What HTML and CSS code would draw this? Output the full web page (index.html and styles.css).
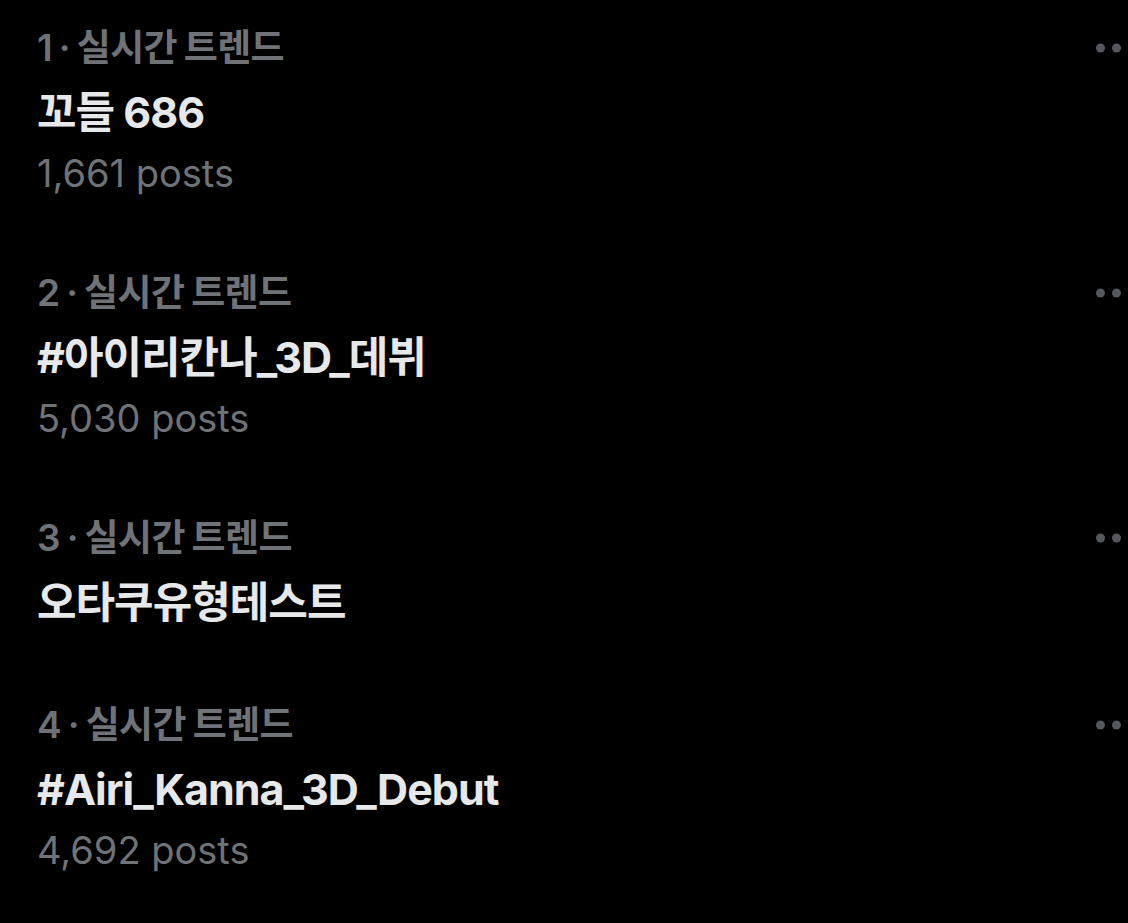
FILE: index.html
```html
<!DOCTYPE html>
<html lang="ko">
<head>
<meta charset="utf-8">
<title>실시간 트렌드</title>
<link rel="stylesheet" href="styles.css">
</head>
<body>
<ul class="trends">
  <li class="trend">
    <div class="trend-body">
      <div class="meta">1 · 실시간 트렌드</div>
      <div class="name">꼬들 686</div>
      <div class="count">1,661 posts</div>
    </div>
    <svg class="more" viewBox="0 0 45 10" width="45" height="10" aria-hidden="true"><circle cx="4.5" cy="5" r="4.5"/><circle cx="20.5" cy="5" r="4.5"/><circle cx="36.5" cy="5" r="4.5"/></svg>
  </li>
  <li class="trend">
    <div class="trend-body">
      <div class="meta">2 · 실시간 트렌드</div>
      <div class="name">#아이리칸나_3D_데뷔</div>
      <div class="count">5,030 posts</div>
    </div>
    <svg class="more" viewBox="0 0 45 10" width="45" height="10" aria-hidden="true"><circle cx="4.5" cy="5" r="4.5"/><circle cx="20.5" cy="5" r="4.5"/><circle cx="36.5" cy="5" r="4.5"/></svg>
  </li>
  <li class="trend">
    <div class="trend-body">
      <div class="meta">3 · 실시간 트렌드</div>
      <div class="name">오타쿠유형테스트</div>
    </div>
    <svg class="more" viewBox="0 0 45 10" width="45" height="10" aria-hidden="true"><circle cx="4.5" cy="5" r="4.5"/><circle cx="20.5" cy="5" r="4.5"/><circle cx="36.5" cy="5" r="4.5"/></svg>
  </li>
  <li class="trend">
    <div class="trend-body">
      <div class="meta">4 · 실시간 트렌드</div>
      <div class="name">#Airi_Kanna_3D_Debut</div>
      <div class="count">4,692 posts</div>
    </div>
    <svg class="more" viewBox="0 0 45 10" width="45" height="10" aria-hidden="true"><circle cx="4.5" cy="5" r="4.5"/><circle cx="20.5" cy="5" r="4.5"/><circle cx="36.5" cy="5" r="4.5"/></svg>
  </li>
</ul>
</body>
</html>
```
FILE: styles.css
```css
html, body {
  margin: 0;
  padding: 0;
  background: #000;
  overflow: hidden;
}
body {
  width: 1128px;
  height: 923px;
  font-family: Inter, "Noto Sans CJK KR", sans-serif;
}
.trends {
  list-style: none;
  margin: 0;
  padding: 16px 0 0 37px;
  display: flex;
  flex-direction: column;
  gap: 59px;
}
.trend {
  display: flex;
  align-items: flex-start;
  justify-content: space-between;
}
.trend-body {
  display: flex;
  flex-direction: column;
}
.meta {
  color: #6f7276;
  font-size: 37px;
  font-weight: 600;
  line-height: 64px;
  letter-spacing: -0.6px;
  word-spacing: -2px;
}
.name {
  color: #e7e8e9;
  font-size: 43px;
  font-weight: 700;
  line-height: 64px;
  letter-spacing: -1px;
}
.count {
  color: #6f7276;
  font-size: 38px;
  font-weight: 400;
  line-height: 58px;
}
.more {
  flex: none;
  fill: #55585c;
  margin-top: 27px;
  margin-right: -12.5px;
}
```
